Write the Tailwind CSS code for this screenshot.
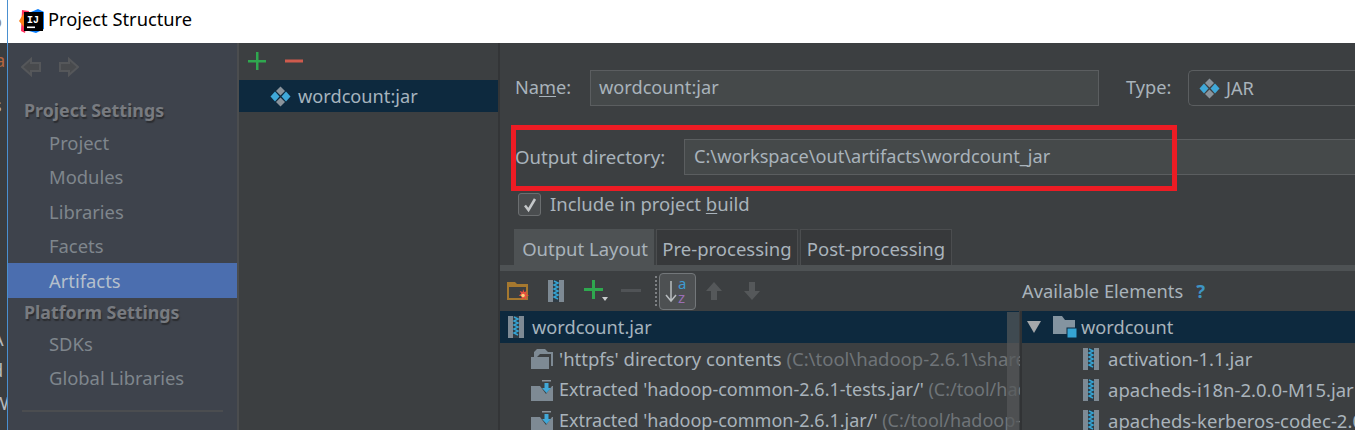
<!DOCTYPE html>
<html lang="en">
<head>
  <meta charset="UTF-8">
  <title>Project Structure</title>
  <script src="https://cdn.jsdelivr.net/npm/@tailwindcss/browser@4"></script>
</head>
<body class="w-[1355px] h-[430px] overflow-hidden flex bg-[#3c3f41] font-['Noto_Sans',sans-serif] text-[18.2px] text-[#a9b3bb]">

  <!-- window behind -->
  <div class="relative w-[7px] shrink-0 overflow-hidden bg-[#3a3d40] text-[#b4b8bc]">
    <div class="h-[43px] bg-white"></div>
    <span class="absolute left-[-9px] top-[8px] text-[#8a8a8a]">o</span>
    <span class="absolute left-[-5px] top-[47px] text-[#b5663f]">a</span>
    <span class="absolute left-[-7px] top-[92px]">s</span>
    <span class="absolute left-[-8px] top-[326px]">A</span>
    <span class="absolute left-[-8px] top-[357px]">d</span>
    <span class="absolute left-[-8px] top-[390px]">W</span>
  </div>
  <div class="w-px shrink-0 bg-[#4a90d0]"></div>

  <div class="flex-1 flex flex-col min-w-0">
    <!-- title bar -->
    <div class="h-[43px] shrink-0 bg-white flex items-center pl-[11px] gap-[4px] text-black">
      <svg width="25" height="25" viewBox="0 0 25 25">
        <path d="M3 1 L10 2 L6 24 L2 22z" fill="#fe315d"/>
        <path d="M0 12 L5 4 L9 9 L5 18z" fill="#fc801d"/>
        <path d="M12 3 L19 0 L25 3 V20 L17 24 L10 22z" fill="#087cfa"/>
        <rect x="5" y="3" width="19" height="19" fill="#000"/>
        <rect x="8" y="17.500" width="8" height="1.600" fill="#fff"/>
        <text x="8" y="14" font-size="10" font-weight="700" fill="#fff" font-family="Liberation Mono">IJ</text>
      </svg>
      <span class="relative top-[-3px] text-[18.3px]">Project Structure</span>
    </div>

    <div class="flex-1 flex min-h-0">
      <!-- sidebar -->
      <div class="w-[229px] shrink-0 bg-[#3e434c] flex flex-col text-[#7f868c] text-[18.4px]">
        <div class="h-[53px] flex items-start gap-[18px] pl-[13px] pt-[14px]">
          <svg width="20" height="20" viewBox="0 0 20 20" fill="#484a4d" stroke="#55575a" stroke-width="2"><path d="M1 10 L10 2 V6 H19 V14 H10 V18z"/></svg>
          <svg width="20" height="20" viewBox="0 0 20 20" fill="#484a4d" stroke="#55575a" stroke-width="2"><path d="M19 10 L10 2 V6 H1 V14 H10 V18z"/></svg>
        </div>
        <div class="h-[29px] pl-[16px] flex items-center font-bold text-[17.8px] text-[#787b80] [text-shadow:1px_2px_1px_#2b2d31]">Project Settings</div>
        <div class="h-[34.500px] pt-[1px] pl-[41px] flex items-center">Project</div>
        <div class="h-[34.500px] pt-[1px] pl-[41px] flex items-center">Modules</div>
        <div class="h-[34.500px] pt-[1px] pl-[41px] flex items-center">Libraries</div>
        <div class="h-[34.500px] pt-[1px] pl-[41px] flex items-center">Facets</div>
        <div class="h-[35px] pt-[1px] pl-[41px] flex items-center bg-[#4b6eaf] text-[#b5c0cc]">Artifacts</div>
        <div class="h-[28px] pl-[16px] flex items-center font-bold text-[17.8px] text-[#787b80] [text-shadow:1px_2px_1px_#2b2d31]">Platform Settings</div>
        <div class="h-[34.500px] pt-[1px] pl-[41px] flex items-center">SDKs</div>
        <div class="h-[34.500px] pt-[1px] pl-[41px] flex items-center">Global Libraries</div>
        <div class="mt-[15px] mx-[14px] h-[2px] bg-[#4b4d50]"></div>
      </div>
      <div class="w-[2px] shrink-0 bg-[#4b4d4f]"></div>

      <!-- artifact list -->
      <div class="w-[259px] shrink-0 bg-[#3c3f41] flex flex-col">
        <div class="h-[37px] flex items-center gap-[19px] pl-[9px] pb-[1px]">
          <svg width="18" height="18" viewBox="0 0 18 18" fill="#2fa84f"><path d="M8 0h2.500v8H18v2.500h-7.500V18H8v-7.500H0V8h8z"/></svg>
          <svg width="18" height="18" viewBox="0 0 18 18" fill="#cf5b4d"><rect y="7.500" width="18" height="3"/></svg>
        </div>
        <div class="h-[32px] bg-[#0d293e] flex items-center gap-[7px] pl-[31px]">
          <svg width="21" height="21" viewBox="0 0 21 21">
            <path d="M10.500 0.500L15 5l-4.500 4.500L6 5z" fill="#8a939b"/><path d="M10.500 11.500L15 16l-4.500 4.500L6 16z" fill="#8a939b"/>
            <path d="M5 5.500L9.500 10.500L5 15.500L0.500 10.500z" fill="#40a8d8"/><path d="M16 5.500L20.500 10.500L16 15.500L11.500 10.500z" fill="#40a8d8"/>
          </svg>
          <span class="relative top-[1px] text-[#a6b4be]">wordcount:jar</span>
        </div>
      </div>
      <div class="w-[2px] shrink-0 bg-[#333537]"></div>

      <!-- settings -->
      <div class="flex-1 min-w-0 bg-[#3c3f41] flex flex-col relative">
        <div class="flex items-end pl-[15px] h-[63px]">
          <span class="w-[75px] h-[36px] flex items-center">Na<u class="underline-offset-2">m</u>e:</span>
          <div class="w-[509px] h-[36px] bg-[#45494a] border border-[#5b5e60] pl-[8px] flex items-center">wordcount:jar</div>
          <span class="ml-[27px] w-[62px] h-[36px] flex items-center">Type:</span>
          <div class="flex-1 h-[36px] border border-[#5b5e60] border-r-0 rounded-l-[5px] flex items-center gap-[6px] pl-[10px]">
            <svg width="21" height="21" viewBox="0 0 21 21">
              <path d="M10.500 0.500L15 5l-4.500 4.500L6 5z" fill="#8a939b"/><path d="M10.500 11.500L15 16l-4.500 4.500L6 16z" fill="#8a939b"/>
              <path d="M5 5.500L9.500 10.500L5 15.500L0.500 10.500z" fill="#40a8d8"/><path d="M16 5.500L20.500 10.500L16 15.500L11.500 10.500z" fill="#40a8d8"/>
            </svg>
            <span class="relative top-[1px]">JAR</span>
          </div>
        </div>
        <div class="flex items-center mt-[33px] pl-[15px]">
          <span class="w-[169px] shrink-0 text-[18.6px]">Output directory:</span>
          <div class="flex-1 h-[36px] bg-[#45494a] border-y border-l border-[#5b5e60] pl-[9px] flex items-center">C:\workspace\out\artifacts\wordcount_jar</div>
        </div>
        <div class="flex items-center gap-[9px] pl-[18px] mt-[18px] h-[23px] text-[18.5px]">
          <div class="w-[23px] h-[23px] rounded-[3px] border border-[#6b6e70] bg-[#4a4d4f] flex items-center justify-center">
            <svg width="16" height="16" viewBox="0 0 16 16" fill="none" stroke="#c4c7c9" stroke-width="2.500"><path d="M3 8.500L6.500 13L13 2"/></svg>
          </div>
          <span class="relative top-[-1px]">Include in project <u class="underline-offset-2">b</u>uild</span>
        </div>
        <div class="flex items-end pl-[14px] mt-[13px] h-[36px] border-b-[6px] border-[#4e5254] box-content text-[18.5px]">
          <div class="h-[36px] pt-[3px] pl-[2px] w-[140px] bg-[#4e5254] flex items-center justify-center">Output Layout</div>
          <div class="h-[36px] pt-[3px] w-[142px] ml-[2px] bg-[#37393b] border border-b-0 border-[#4b4d4f] flex items-center justify-center">Pre-processing</div>
          <div class="h-[36px] pt-[3px] w-[152px] ml-[2px] bg-[#37393b] border border-b-0 border-[#4b4d4f] flex items-center justify-center">Post-processing</div>
        </div>
        <div class="flex flex-1 min-h-0 overflow-hidden text-[18.5px]">
          <!-- output tree -->
          <div class="w-[520px] shrink-0 flex flex-col relative">
            <div class="h-[40px] flex items-center pl-[7px] shrink-0">
              <svg width="23" height="23" viewBox="0 0 23 23">
                <path d="M0 2h8l2 2h11v16H0z" fill="#a5782f"/><path d="M2 7h17v11H2z" fill="#3c3f41"/>
                <path d="M16 9l1.300 3 3-1-1.500 2.800 3.200 1.700-3 .8.500 3.700-2.500-2-2.500 2 .2-3.700-3-.8 2.500-1.700-1.500-2.800 3 1z" fill="#e8503f"/>
                <circle cx="16" cy="15.500" r="1.800" fill="#f6d27a"/>
              </svg>
              <svg class="ml-[18px]" width="16" height="22" viewBox="0 0 16 22">
                <rect width="16" height="22" fill="#7e8a94"/><rect x="5" width="6" height="22" fill="#2f3b44"/><path d="M6 1l4 2-4 2 4 2-4 2 4 2-4 2 4 2-4 2 4 2" fill="none" stroke="#35a4d4" stroke-width="1.500"/>
              </svg>
              <svg class="ml-[19px]" width="30" height="26" viewBox="0 0 30 26">
                <path d="M9 2h3v8h8v3h-8v8H9v-8H1v-3h8z" fill="#2fa84f"/><path d="M19 19h6l-3 4z" fill="#c8cbcd"/>
              </svg>
              <svg class="ml-[8px]" width="20" height="4" viewBox="0 0 20 4" fill="#505356"><rect width="20" height="3"/></svg>
              <div class="ml-[14px] h-[30px] border-l-2 border-dotted border-[#7d8083]"></div>
              <div class="ml-[2px] w-[37px] h-[37px] rounded-[4px] border border-[#73777a] bg-[#4d5052] flex items-center justify-center">
                <svg width="30" height="30" viewBox="0 0 30 30" fill="none">
                  <path d="M8 5v20M3 19l5 6 5-6" stroke="#b8bcbf" stroke-width="1.500"/>
                  <text x="15" y="13" font-size="15" fill="#3e9bd0" font-family="Noto Sans">a</text>
                  <text x="15" y="27" font-size="15" fill="#9a6fb5" font-family="Noto Sans">z</text>
                </svg>
              </div>
              <svg class="ml-[8px]" width="20" height="20" viewBox="0 0 20 20" fill="#55585a"><path d="M10 1L18 10H13V19H7V10H2z"/></svg>
              <svg class="ml-[18px]" width="20" height="20" viewBox="0 0 20 20" fill="#55585a"><path d="M10 19L18 10H13V1H7V10H2z"/></svg>
            </div>
            <div class="h-[32px] shrink-0 bg-[#0d293e] flex items-center pl-[8px] gap-[8px] mr-[1px]">
              <svg width="16" height="22" viewBox="0 0 16 22">
                <rect width="16" height="22" fill="#7e8a94"/><rect x="5" width="6" height="22" fill="#2f3b44"/><path d="M6 1l4 2-4 2 4 2-4 2 4 2-4 2 4 2-4 2 4 2" fill="none" stroke="#35a4d4" stroke-width="1.500"/>
              </svg>
              <span class="relative top-[1px] text-[18.2px] text-[#a6b4be]">wordcount.jar</span>
            </div>
            <div class="h-[31px] shrink-0 flex items-center pl-[31px] gap-[6px] whitespace-nowrap overflow-hidden">
              <svg class="shrink-0" width="22" height="20" viewBox="0 0 22 20" fill="#7e8a94"><path d="M3 3l3-3h8l3 3h5v14h-2V5H9L6 8H3zM0 8h18v12H0z"/></svg>
              <span>'httpfs' directory contents <span class="text-[#6f7478]">(C:\tool\hadoop-2.6.1\share\hadoop</span></span>
            </div>
            <div class="h-[31px] shrink-0 flex items-center pl-[31px] gap-[6px] whitespace-nowrap overflow-hidden text-[18px]">
              <svg class="shrink-0" width="22" height="22" viewBox="0 0 22 22"><path d="M0 7h22v15H0z" fill="#7e8a94"/><path d="M9 0h13v3h-4v4h3l-6 8-6-8h3V3H9z" fill="#3c3f41"/><path d="M11 1h9v1.500h-9z" fill="#8a939b"/><path d="M13.500 4h4v5h2.500l-4.500 5-4.500-5h2.500z" fill="#40a8d8"/></svg>
              <span>Extracted 'hadoop-common-2.6.1-tests.jar/' <span class="text-[#6f7478]">(C:/tool/hadoop-2.6.1/share</span></span>
            </div>
            <div class="h-[31px] shrink-0 flex items-center pl-[31px] gap-[6px] whitespace-nowrap overflow-hidden text-[18px]">
              <svg class="shrink-0" width="22" height="22" viewBox="0 0 22 22"><path d="M0 7h22v15H0z" fill="#7e8a94"/><path d="M9 0h13v3h-4v4h3l-6 8-6-8h3V3H9z" fill="#3c3f41"/><path d="M11 1h9v1.500h-9z" fill="#8a939b"/><path d="M13.500 4h4v5h2.500l-4.500 5-4.500-5h2.500z" fill="#40a8d8"/></svg>
              <span>Extracted 'hadoop-common-2.6.1.jar/' <span class="text-[#6f7478]">(C:/tool/hadoop-2.6.1/share/hadoop</span></span>
            </div>
            <div class="absolute right-[1px] top-[41px] bottom-0 w-[12px] bg-[#55585a]/70"></div>
          </div>
          <div class="w-[2px] shrink-0 mt-[40px] bg-[#313335]"></div>
          <!-- available elements -->
          <div class="flex-1 min-w-0 flex flex-col">
            <div class="h-[40px] flex items-center gap-[13px] shrink-0">
              <span class="text-[18.3px]">Available Elements</span>
              <span class="font-bold text-[#3e94c4]">?</span>
            </div>
            <div class="h-[32px] shrink-0 bg-[#0d293e] flex items-center pl-[5px]">
              <svg width="14" height="12" viewBox="0 0 14 12" fill="#a5a8aa"><path d="M0 0h14L7 12z"/></svg>
              <svg class="ml-[12px]" width="24" height="22" viewBox="0 0 24 22"><path d="M0 0h9l3 4h10v14H0z" fill="#8494a0"/><rect x="14" y="12" width="10" height="10" fill="#35a4d4" stroke="#0d293e" stroke-width="1"/></svg>
              <span class="relative top-[1px] ml-[4px] text-[18.2px]">wordcount</span>
            </div>
            <div class="h-[31px] shrink-0 flex items-center pl-[61px] gap-[9px] whitespace-nowrap">
              <svg class="shrink-0" width="16" height="22" viewBox="0 0 16 22">
                <rect width="16" height="22" fill="#7e8a94"/><rect x="5" width="6" height="22" fill="#2f3b44"/><path d="M6 1l4 2-4 2 4 2-4 2 4 2-4 2 4 2-4 2 4 2" fill="none" stroke="#35a4d4" stroke-width="1.500"/>
              </svg>
              <span>activation-1.1.jar</span>
            </div>
            <div class="h-[31px] shrink-0 flex items-center pl-[61px] gap-[9px] whitespace-nowrap">
              <svg class="shrink-0" width="16" height="22" viewBox="0 0 16 22">
                <rect width="16" height="22" fill="#7e8a94"/><rect x="5" width="6" height="22" fill="#2f3b44"/><path d="M6 1l4 2-4 2 4 2-4 2 4 2-4 2 4 2-4 2 4 2" fill="none" stroke="#35a4d4" stroke-width="1.500"/>
              </svg>
              <span>apacheds-i18n-2.0.0-M15.jar</span>
            </div>
            <div class="h-[31px] shrink-0 flex items-center pl-[61px] gap-[9px] whitespace-nowrap">
              <svg class="shrink-0" width="16" height="22" viewBox="0 0 16 22">
                <rect width="16" height="22" fill="#7e8a94"/><rect x="5" width="6" height="22" fill="#2f3b44"/><path d="M6 1l4 2-4 2 4 2-4 2 4 2-4 2 4 2-4 2 4 2" fill="none" stroke="#35a4d4" stroke-width="1.500"/>
              </svg>
              <span>apacheds-kerberos-codec-2.0.0-M15.jar</span>
            </div>
          </div>
        </div>

        <!-- red annotation box drawn over the dialog -->
        <div class="absolute left-[11px] top-[82px] w-[666px] h-[66px] border-[5px] border-[#ed1c24]"></div>
      </div>
    </div>
  </div>
</body>
</html>
